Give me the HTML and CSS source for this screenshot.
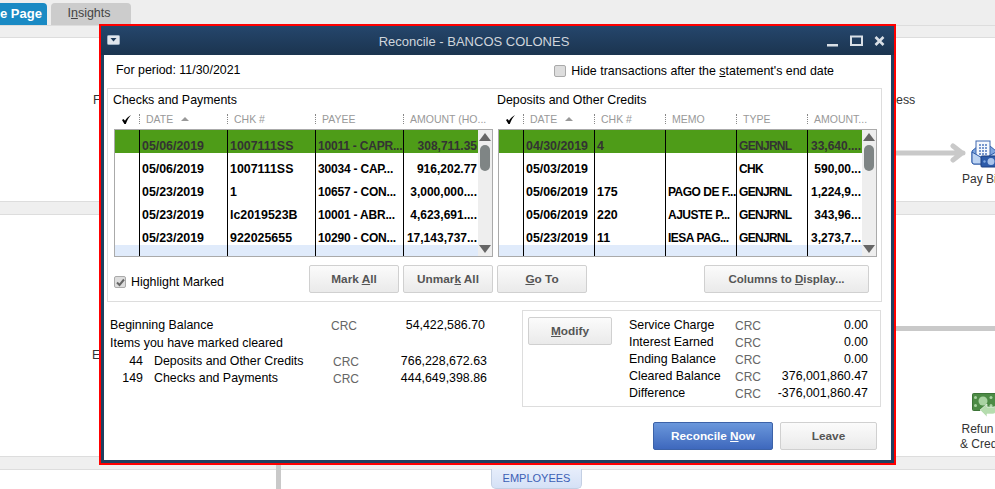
FILE: index.html
```html
<!DOCTYPE html>
<html lang="en">
<head>
    <meta charset="UTF-8">
    <meta name="viewport" content="width=device-width, initial-scale=1.0">
    <title>Reconcile - BANCOS COLONES</title>
    <link rel="stylesheet" href="styles.css">
</head>
<body>
    <div class="page">
        <!-- Home page behind the dialog -->
        <div class="tabs">
            <div class="tab tab-active">e Page</div>
            <div class="tab">I<u>n</u>sights</div>
        </div>
        <div class="band band-top"></div>

        <div class="flow flow-a">
            <span class="node node-f">F</span>
            <span class="node node-ess">ess</span>
            <svg class="arrow" width="75" height="20" viewBox="0 0 75 20">
                <path d="M0 10H70M60 3l9 7-9 7" fill="none" stroke="#c9c9c9" stroke-width="5" stroke-linecap="round" stroke-linejoin="round"/>
            </svg>
            <svg class="icon icon-bills" width="32" height="28" viewBox="0 0 32 28">
                <path d="M1 11l6-5h12l6 5v11a2 2 0 0 1-2 2H3a2 2 0 0 1-2-2z" fill="#7ea6df" stroke="#2f5ba8"/>
                <rect x="5" y="1" width="14" height="16" fill="#f4f7fc" stroke="#3f68b0"/>
                <path d="M8 5h8M8 8h8M8 11h8M8 14h8" stroke="#4d78bd" stroke-width="1.4" stroke-dasharray="2 1"/>
                <path d="M1 12l12 7 12-7v10a2 2 0 0 1-2 2H3a2 2 0 0 1-2-2z" fill="#bcd3f2" stroke="#2f5ba8"/>
                <rect x="10" y="16" width="22" height="11" rx="1" fill="#2d5ba9" stroke="#1d3f80"/>
                <circle cx="20" cy="21.500" r="3.500" fill="#a9c4ec"/>
                <circle cx="13.500" cy="21.500" r="1.200" fill="#7ea6df"/>
            </svg>
            <span class="node node-pay">Pay Bi</span>
        </div>
        <div class="band"></div>

        <div class="flow flow-b">
            <span class="node node-e">E</span>
            <div class="hline"></div>
            <svg class="icon icon-refund" width="30" height="25" viewBox="0 0 30 25">
                <rect x=".5" y=".5" width="29" height="17" rx="1" fill="#4c8b45" stroke="#3c7437"/>
                <circle cx="11" cy="8" r="4.500" fill="#a9d3a2"/>
                <circle cx="3.500" cy="4.500" r="1.500" fill="#a9d3a2"/>
                <circle cx="3.500" cy="12.500" r="1.500" fill="#a9d3a2"/>
                <circle cx="19" cy="4.500" r="1.500" fill="#a9d3a2"/>
                <circle cx="19" cy="12.500" r="1.500" fill="#a9d3a2"/>
                <path d="M8 17l7-6v3h6c2 0 3-1 3-3v6c0 2-1 4-3 4h-6v3z" fill="#b5dcae" stroke="#fff" stroke-width=".6"/>
            </svg>
            <span class="node node-refund">Refun<br>&amp; Cred</span>
        </div>
        <div class="band"></div>

        <div class="flow flow-c">
            <div class="vline"></div>
            <div class="emp-btn">EMPLOYEES</div>
        </div>

        <!-- Reconcile dialog -->
        <div class="dialog">
            <div class="titlebar">
                <svg class="win-menu" width="13" height="10" viewBox="0 0 13 10">
                    <rect x=".5" y=".5" width="12" height="9" rx="1" fill="#dfe5ec" stroke="#9fb0c2"/>
                    <path d="M3.500 3h6L6.500 6.500z" fill="#1d3a5a"/>
                </svg>
                <span class="win-title">Reconcile - BANCOS COLONES</span>
                <div class="win-controls">
                    <svg width="12" height="12" viewBox="0 0 12 12"><rect x="0" y="9" width="11" height="2.500" fill="#d9dfe6"/></svg>
                    <svg width="13" height="12" viewBox="0 0 13 12"><rect x="1" y="1.500" width="11" height="8.500" fill="none" stroke="#d9dfe6" stroke-width="2"/></svg>
                    <svg width="11" height="12" viewBox="0 0 11 12"><path d="M1.500 2l8 8M9.500 2l-8 8" stroke="#d9dfe6" stroke-width="2.600"/></svg>
                </div>
            </div>

            <div class="dialog-body">
                <div class="period-row">
                    <span>For period: 11/30/2021</span>
                    <label class="check hide-check"><span class="box"></span><span>Hide transactions after the <u>s</u>tatement's end date</span></label>
                </div>

                <div class="panel">
                    <div class="panel-col">
                        <div class="panel-title title-left">Checks and Payments</div>
                        <div class="grid-head cols-left">
                            <svg class="tick" width="9" height="9" viewBox="0 0 9 9"><path d="M0 5l1.500-1L3 5.800C4.400 3.400 6.400 1.400 9 0 6.800 2.400 5 5.400 3.800 9H2.400z"/></svg>
                            <span class="hcell">DATE<i class="sort"></i></span>
                            <span class="hcell">CHK #</span>
                            <span class="hcell">PAYEE</span>
                            <span class="hcell">AMOUNT (HO...</span>
                        </div>
                        <div class="table">
                            <div class="rows">
                                <div class="row cols-left marked"><span></span><span>05/06/2019</span><span>1007111SS</span><span>10011 - CAPR...</span><span class="num">308,711.35</span></div>
                                <div class="row cols-left"><span></span><span>05/06/2019</span><span>1007111SS</span><span>30034 - CAP...</span><span class="num">916,202.77</span></div>
                                <div class="row cols-left"><span></span><span>05/23/2019</span><span>1</span><span>10657 - CON...</span><span class="num">3,000,000....</span></div>
                                <div class="row cols-left"><span></span><span>05/23/2019</span><span>lc2019523B</span><span>10001 - ABR...</span><span class="num">4,623,691....</span></div>
                                <div class="row cols-left"><span></span><span>05/23/2019</span><span>922025655</span><span>10290 - CON...</span><span class="num">17,143,737...</span></div>
                                <div class="row cols-left row-next"><span></span><span></span><span></span><span></span><span></span></div>
                            </div>
                            <div class="scrollbar"><i class="up"></i><i class="thumb"></i><i class="down"></i></div>
                        </div>
                    </div>

                    <div class="panel-col">
                        <div class="panel-title title-right">Deposits and Other Credits</div>
                        <div class="grid-head cols-right">
                            <svg class="tick" width="9" height="9" viewBox="0 0 9 9"><path d="M0 5l1.500-1L3 5.800C4.400 3.400 6.400 1.400 9 0 6.800 2.400 5 5.400 3.800 9H2.400z"/></svg>
                            <span class="hcell">DATE<i class="sort"></i></span>
                            <span class="hcell">CHK #</span>
                            <span class="hcell">MEMO</span>
                            <span class="hcell">TYPE</span>
                            <span class="hcell">AMOUNT...</span>
                        </div>
                        <div class="table">
                            <div class="rows">
                                <div class="row cols-right marked"><span></span><span>04/30/2019</span><span>4</span><span></span><span class="type">GENJRNL</span><span class="num">33,640....</span></div>
                                <div class="row cols-right"><span></span><span>05/03/2019</span><span></span><span></span><span class="type">CHK</span><span class="num">590,00...</span></div>
                                <div class="row cols-right"><span></span><span>05/06/2019</span><span>175</span><span>PAGO DE F...</span><span class="type">GENJRNL</span><span class="num">1,224,9...</span></div>
                                <div class="row cols-right"><span></span><span>05/06/2019</span><span>220</span><span>AJUSTE P...</span><span class="type">GENJRNL</span><span class="num">343,96...</span></div>
                                <div class="row cols-right"><span></span><span>05/23/2019</span><span>11</span><span>IESA PAG...</span><span class="type">GENJRNL</span><span class="num">3,273,7...</span></div>
                                <div class="row cols-right row-next"><span></span><span></span><span></span><span></span><span></span><span></span></div>
                            </div>
                            <div class="scrollbar"><i class="up"></i><i class="thumb"></i><i class="down"></i></div>
                        </div>
                    </div>

                    <div class="panel-actions">
                        <label class="check highlight-check"><span class="box box-on"><svg width="9" height="9" viewBox="0 0 9 9"><path d="M1 4.500l2.500 2.500L8 1.500" fill="none" stroke="#666" stroke-width="2"/></svg></span><span>Highlight Marked</span></label>
                        <button class="btn btn-mark">Mark <u>A</u>ll</button>
                        <button class="btn btn-mark">Unmar<u>k</u> All</button>
                        <button class="btn btn-mark"><u>G</u>o To</button>
                        <button class="btn btn-cols">Columns to <u>D</u>isplay...</button>
                    </div>
                </div>

                <div class="summary">
                    <div class="sum-left">
                        <div class="sum-row"><span class="sum-begin">Beginning Balance</span><span class="crc">CRC</span><span class="amt">54,422,586.70</span></div>
                        <div class="sum-row">Items you have marked cleared</div>
                        <div class="sum-row sum-tight"><span class="count">44</span><span class="sum-label">Deposits and Other Credits</span><span class="crc">CRC</span><span class="amt">766,228,672.63</span></div>
                        <div class="sum-row"><span class="count">149</span><span class="sum-label">Checks and Payments</span><span class="crc">CRC</span><span class="amt">444,649,398.86</span></div>
                    </div>
                    <div class="sum-right">
                        <div class="totals-box">
                            <button class="btn btn-modify"><u>M</u>odify</button>
                            <div class="totals">
                                <span>Service Charge</span><span class="crc">CRC</span><span class="amt">0.00</span>
                                <span>Interest Earned</span><span class="crc">CRC</span><span class="amt">0.00</span>
                                <span>Ending Balance</span><span class="crc">CRC</span><span class="amt">0.00</span>
                                <span>Cleared Balance</span><span class="crc">CRC</span><span class="amt">376,001,860.47</span>
                                <span>Difference</span><span class="crc">CRC</span><span class="amt">-376,001,860.47</span>
                            </div>
                        </div>
                        <div class="dialog-actions">
                            <button class="btn btn-primary">Reconcile <u>N</u>ow</button>
                            <button class="btn btn-leave">Leave</button>
                        </div>
                    </div>
                </div>
            </div>
        </div>
    </div>
</body>
</html>
```

FILE: styles.css
```css
* {
    box-sizing: border-box;
}
html, body {
    margin: 0;
    padding: 0;
    overflow: hidden;
}
body {
    font-family: "Liberation Sans", Arial, sans-serif;
    font-size: 12.400px;
    color: #000;
    background-color: #fff;
}
.page {
    position: relative;
    width: 995px;
    height: 489px;
    overflow: hidden;
}

/* background page */
.tabs {
    display: flex;
    gap: 4px;
    height: 25px;
    padding-top: 3px;
    background-color: #eee;
}
.tab {
    width: 80px;
    height: 22px;
    padding-right: 4px;
    border-radius: 4px 4px 0 0;
    background-color: #ccc;
    color: #444;
    font-size: 12.500px;
    line-height: 21px;
    text-align: center;
}
.tab-active {
    width: 47px;
    border-top-left-radius: 0;
    background-color: #1a8ac4;
    color: #fff;
    font-size: 13px;
    font-weight: bold;
    text-align: right;
    white-space: nowrap;
    padding-right: 8px;
}
.band {
    height: 14px;
    border-top: 1px solid #ddd;
    border-bottom: 1px solid #ddd;
    background-color: #efefef;
}
.band-top {
    height: 13px;
}
.flow {
    position: relative;
}
.flow-a {
    height: 163px;
}
.flow-b {
    height: 241px;
}
.flow-c {
    height: 19px;
}
.node {
    position: absolute;
    color: #333;
    line-height: 14px;
}
.node-f {
    left: 93px;
    top: 55px;
}
.node-ess {
    left: 896px;
    top: 55px;
}
.node-pay {
    left: 962px;
    top: 134px;
    font-size: 12px;
    white-space: nowrap;
}
.node-e {
    left: 92px;
    top: 133px;
}
.node-refund {
    left: 960px;
    top: 207px;
    width: 35px;
    font-size: 12px;
    line-height: 15px;
    white-space: nowrap;
    text-align: center;
}
.arrow {
    position: absolute;
    left: 893px;
    top: 105px;
}
.icon {
    position: absolute;
}
.icon-bills {
    left: 971px;
    top: 102px;
}
.icon-refund {
    left: 972px;
    top: 178px;
}
.hline {
    position: absolute;
    left: 890px;
    right: 0;
    top: 111px;
    height: 5px;
    background-color: #c9c9c9;
}
.vline {
    position: absolute;
    left: 276px;
    top: -5px;
    width: 5px;
    height: 30px;
    background-color: #c9c9c9;
}
.emp-btn {
    position: absolute;
    left: 491px;
    top: -1px;
    width: 91px;
    height: 20px;
    border: 1px solid #c3cfe3;
    border-top: none;
    border-radius: 0 0 5px 5px;
    background: linear-gradient(#e6edfb, #d5e1f6);
    color: #3c60b5;
    font-size: 11px;
    line-height: 19px;
    text-align: center;
}

/* dialog */
.dialog {
    position: absolute;
    left: 99px;
    top: 24px;
    width: 797px;
    height: 441px;
    border: 2px solid #f00;
    display: flex;
    flex-direction: column;
}
.titlebar {
    position: relative;
    flex: none;
    height: 29px;
    padding: 2px 47px 0 0;
    display: flex;
    align-items: center;
    justify-content: center;
    background: linear-gradient(#25466c, #1b344f);
}
.win-menu {
    position: absolute;
    left: 6px;
    top: 9px;
}
.win-title {
    color: #cfd5dc;
    font-size: 13px;
}
.win-controls {
    position: absolute;
    right: 9px;
    top: 9px;
    display: flex;
    gap: 11px;
}
.dialog-body {
    flex: 1;
    background-color: #fff;
    border: 3px solid #20405f;
    border-top: none;
    min-height: 0;
}
.period-row {
    height: 33px;
    padding: 8px 57px 0 12px;
    display: flex;
    justify-content: space-between;
    line-height: 14px;
}
.check {
    display: flex;
    align-items: center;
}
.box {
    flex: none;
    width: 12px;
    height: 12px;
    border: 1px solid #aaa;
    border-radius: 2px;
    background-color: #ddd;
    margin-right: 5px;
    display: flex;
    align-items: center;
    justify-content: center;
}
.hide-check {
    height: 16px;
}

.panel {
    width: 775px;
    height: 214px;
    margin-left: 3px;
    border: 1px solid #ddd;
    padding: 0 4px 0 6px;
    display: grid;
    grid-template-columns: 379px 379px;
    column-gap: 5px;
    align-content: start;
}
.panel-title {
    height: 20px;
    line-height: 22px;
    margin-left: -1px;
}
.grid-head {
    display: grid;
    height: 20px;
    color: #999;
    font-size: 10.500px;
    align-items: center;
}
.cols-left {
    grid-template-columns: 25px 88px 88px 88px 75px;
}
.cols-right {
    grid-template-columns: 25px 71px 71px 71px 71px 55px;
}
.tick {
    margin-left: 8px;
}
.hcell {
    height: 10px;
    line-height: 10px;
    border-left: 1px dotted #888;
    padding-left: 6px;
    white-space: nowrap;
    display: flex;
    align-items: center;
}
.sort {
    width: 0;
    height: 0;
    margin-left: 8px;
    border-left: 4px solid transparent;
    border-right: 4px solid transparent;
    border-bottom: 4px solid #999;
}
.table {
    display: flex;
    height: 128px;
    border: 1px solid #aaa;
    overflow: hidden;
}
.rows {
    flex: 1;
    min-width: 0;
}
.row {
    display: grid;
    height: 23px;
    margin-right: -1px;
    font-size: 12px;
    font-weight: bold;
    line-height: 33px;
    overflow: hidden;
}
.cols-left.row {
    grid-template-columns: 24px 88px 88px 88px 75px;
}
.cols-right.row {
    grid-template-columns: 24px 71px 71px 71px 71px 55px;
}
.row span {
    height: 23px;
    padding-left: 2px;
    white-space: nowrap;
    overflow: hidden;
    border-left: 1px solid #000;
}
.row span:first-child {
    border-left: none;
}
.row span:nth-child(2), .row span:nth-child(3) {
    font-size: 12.400px;
}
.row span:nth-child(4) {
    letter-spacing: -0.2px;
}
.cols-right.row span:nth-child(4) {
    letter-spacing: -0.5px;
}
.row .num {
    padding: 0 1px 0 0;
    letter-spacing: 0;
    text-align: right;
}
.row .type {
    letter-spacing: -0.7px;
}
.marked {
    background-color: #4e9c18;
    color: #333;
}
.row-next {
    background-color: #e0ebfb;
}
.scrollbar {
    position: relative;
    flex: none;
    width: 14px;
    background-color: #eee;
}
.up, .down {
    position: absolute;
    left: 1px;
    width: 0;
    height: 0;
    border-left: 6px solid transparent;
    border-right: 6px solid transparent;
}
.up {
    top: 3px;
    border-bottom: 8px solid #666;
}
.down {
    bottom: 3px;
    border-top: 8px solid #666;
}
.thumb {
    position: absolute;
    left: 2px;
    top: 15px;
    width: 10px;
    height: 26px;
    border-radius: 5px;
    background-color: #7f8585;
}
.panel-actions {
    grid-column: 1 / -1;
    display: flex;
    gap: 4px;
    margin-top: 8px;
    margin-right: 8px;
}
.highlight-check {
    width: 191px;
    padding-top: 6px;
}
.btn {
    height: 28px;
    padding: 0;
    border: 1px solid #d0d0d0;
    border-radius: 2px;
    background: linear-gradient(#fbfbfb, #eaeaea);
    color: #555;
    font-family: inherit;
    font-size: 11.800px;
    font-weight: bold;
}
.btn-mark {
    width: 90px;
}
.btn-cols {
    width: 165px;
    margin-left: auto;
    font-size: 11.500px;
}

.summary {
    display: flex;
    justify-content: space-between;
    padding: 8px 10px 0 6px;
}
.sum-left {
    padding-top: 6px;
}
.sum-row {
    display: flex;
    height: 18px;
    line-height: 18px;
}
.sum-tight {
    height: 17px;
}
.sum-begin {
    width: 221px;
}
.count {
    width: 33px;
    text-align: right;
}
.sum-label {
    width: 190px;
    padding-left: 11px;
}
.crc {
    color: #666;
    font-size: 12px;
    padding-top: 1px;
}
.sum-left .crc {
    width: 40px;
}
.sum-left .amt {
    width: 114px;
    text-align: right;
}
.sum-right {
    width: 359px;
}
.totals-box {
    display: flex;
    align-items: flex-start;
    height: 97px;
    border: 1px solid #ddd;
    padding: 6px 0 0 5px;
}
.btn-modify {
    width: 84px;
}
.totals {
    display: grid;
    grid-template-columns: 106px 40px 93px;
    grid-auto-rows: 17px;
    margin-left: 17px;
    line-height: 17px;
}
.totals .amt {
    text-align: right;
}
.dialog-actions {
    display: flex;
    justify-content: flex-end;
    gap: 7px;
    margin-top: 15px;
    margin-right: 4px;
}
.btn-primary {
    width: 120px;
    border-color: #3c62a8;
    background: linear-gradient(#6a97db, #3e68bd);
    color: #fff;
}
.btn-leave {
    width: 97px;
}
```
